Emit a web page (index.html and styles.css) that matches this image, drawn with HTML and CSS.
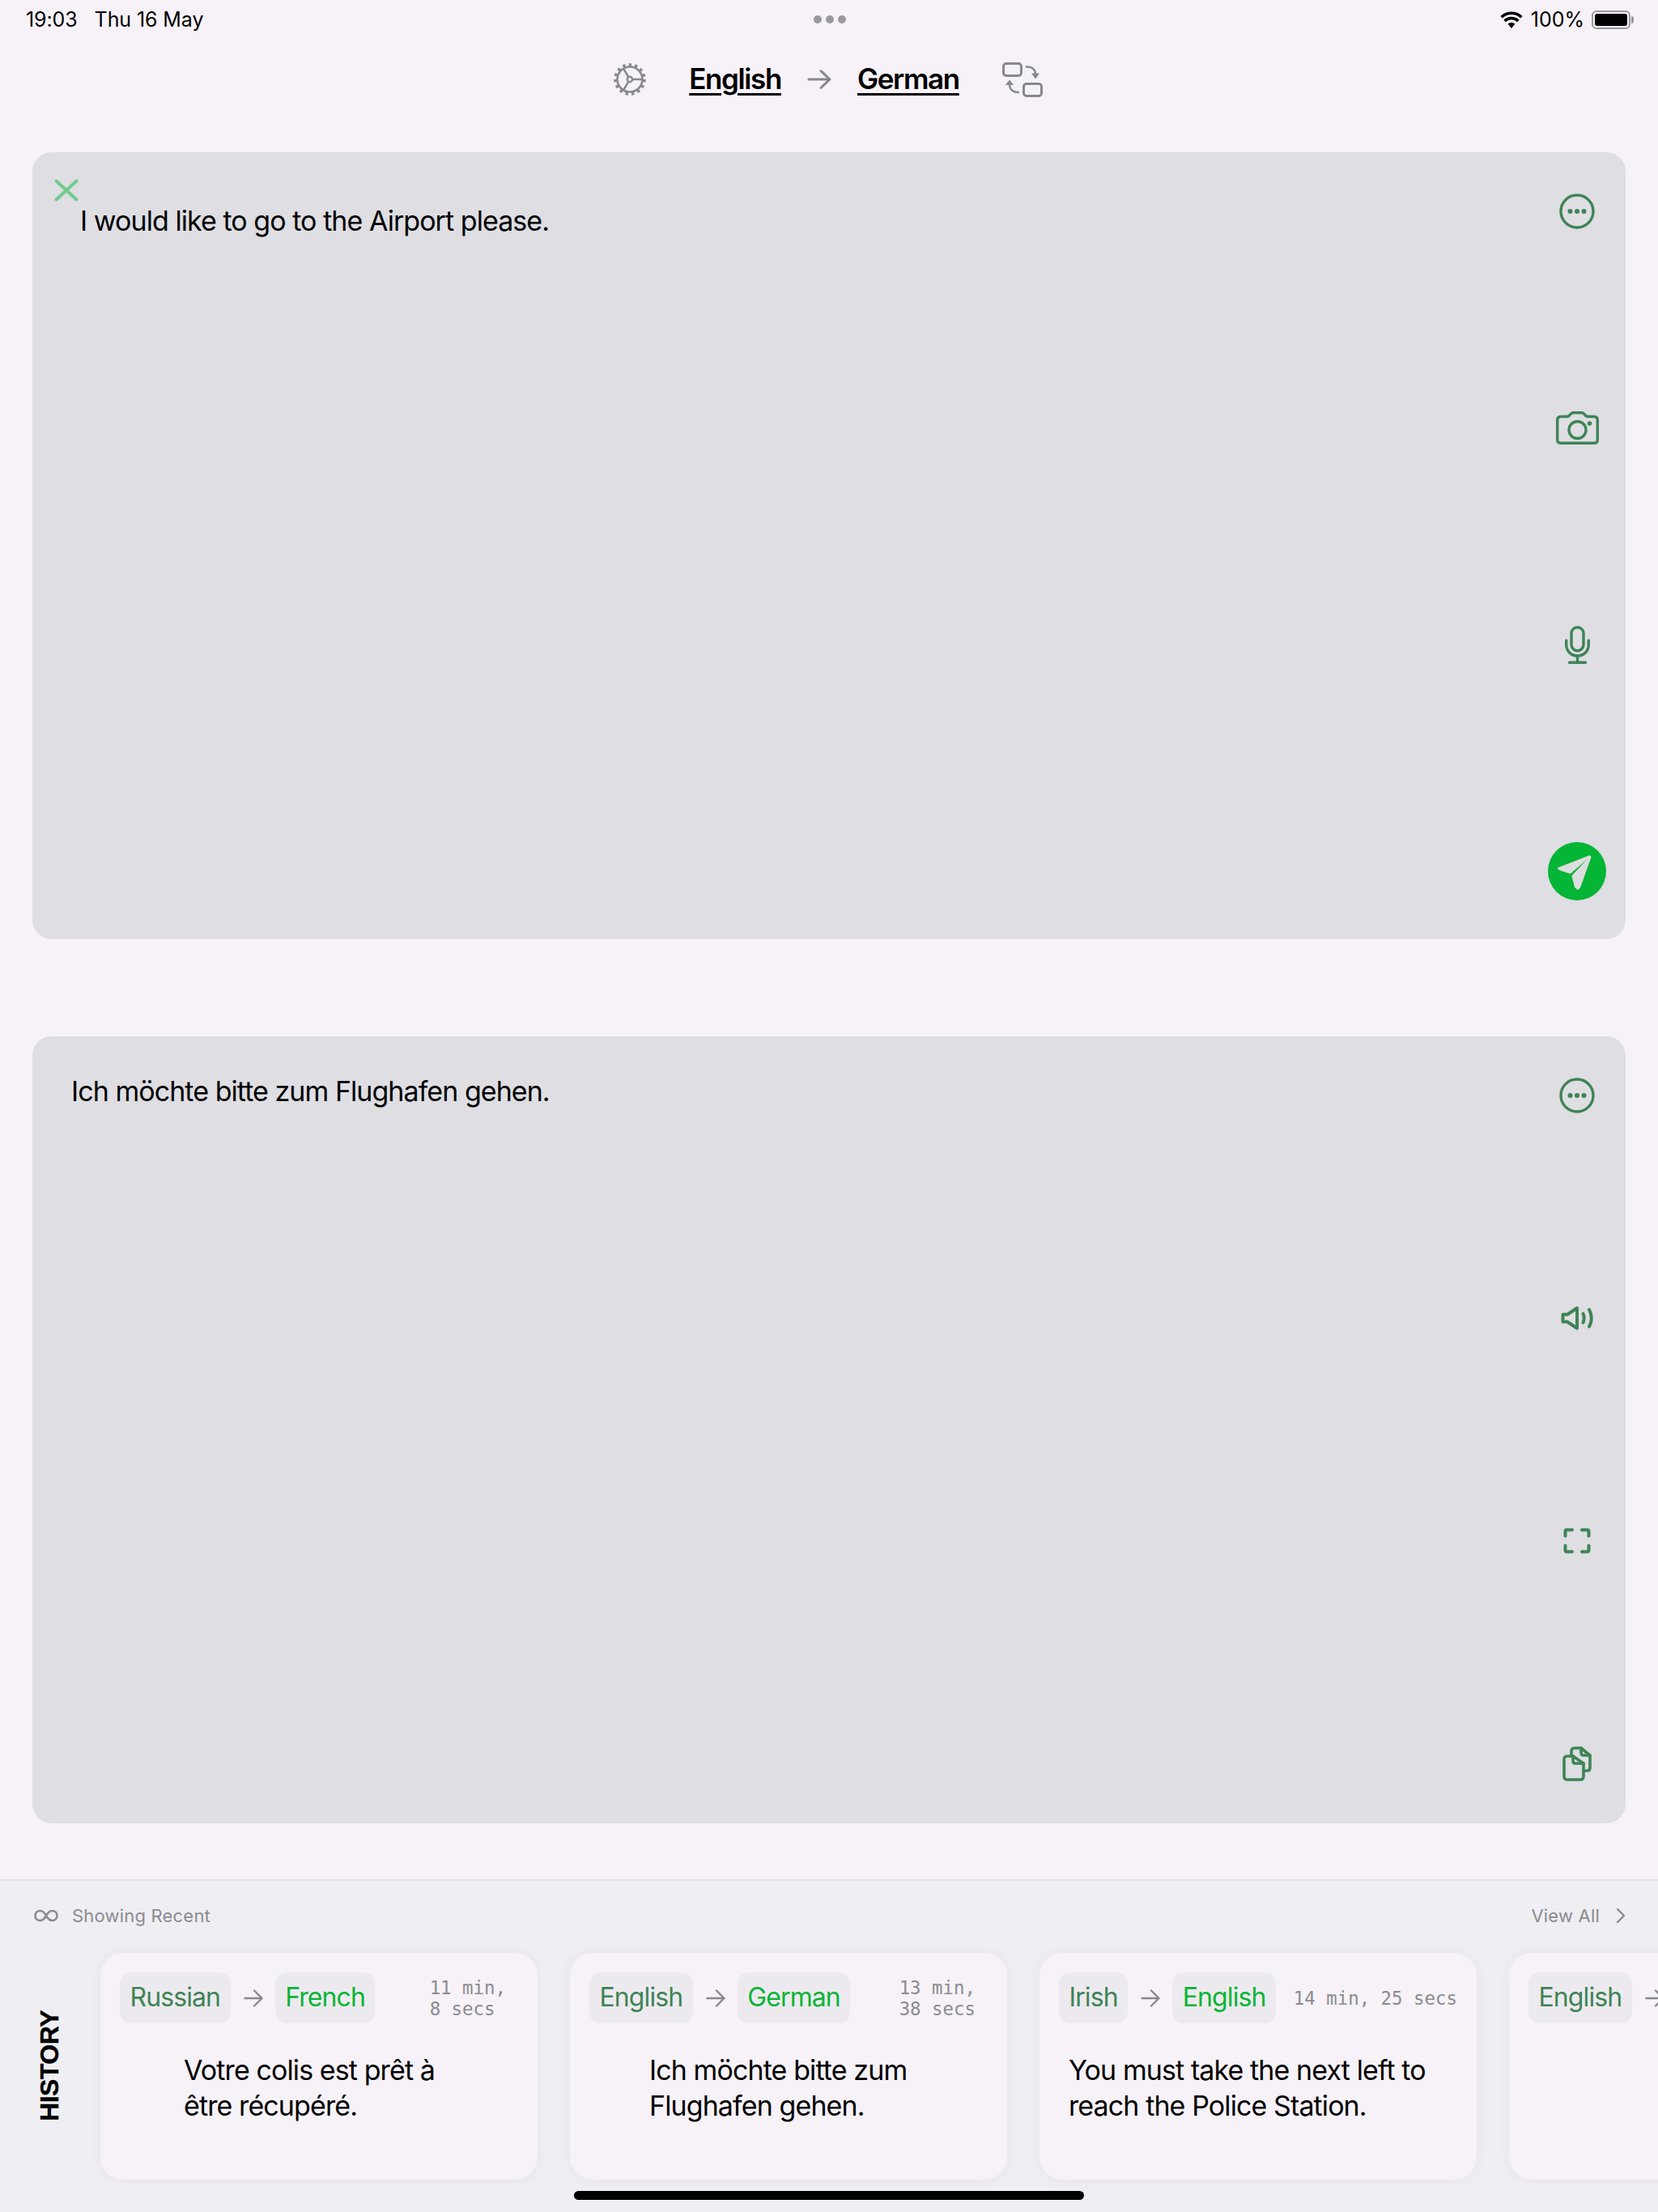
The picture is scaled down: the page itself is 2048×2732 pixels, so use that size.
FILE: index.html
```html
<!DOCTYPE html>
<html lang="en">
<head>
<meta charset="utf-8">
<title>Translate</title>
<link rel="stylesheet" href="styles.css">
</head>
<body>
<div class="page">
  <div class="status">
    <div class="status-left"><span>19:03</span><span>Thu 16 May</span></div>
    <div class="status-dots"><i></i><i></i><i></i></div>
    <div class="status-right">
      <svg class="wifi" viewBox="0 0 28 21"><path d="M14 21 L9.6 15.6 A7 7 0 0 1 18.4 15.6 Z"/><path d="M5.6 11.8 A12.5 12.5 0 0 1 22.4 11.8" fill="none" stroke="#000" stroke-width="3.6"/><path d="M1.6 7.2 A18 18 0 0 1 26.4 7.2" fill="none" stroke="#000" stroke-width="3.6"/></svg>
      <span>100%</span>
      <div class="battery"><div class="battery-fill"></div></div>
    </div>
  </div>

  <header class="langbar">
    <svg class="gear" viewBox="0 0 40 40" fill="none" stroke="#88888c"><circle cx="20" cy="20" r="15.5" stroke-width="2.6"/><circle cx="20" cy="20" r="18" stroke-width="3.6" stroke-dasharray="3.4 4.14"/><circle cx="20" cy="20" r="3.2" stroke-width="2.4"/><path d="M23 20H35M18.4 17.3L12.3 6.8M18.4 22.7L12.3 33.2" stroke-width="2.6"/></svg>
    <span class="lang">English</span>
    <svg class="bar-arrow" viewBox="0 0 30 26" fill="none" stroke="#88888c" stroke-width="3" stroke-linecap="round" stroke-linejoin="round"><path d="M2 13H28M17 2.5L28 13L17 23.5"/></svg>
    <span class="lang">German</span>
    <svg class="swap" viewBox="0 0 50 43" fill="none" stroke="#88888c" stroke-width="3"><rect x="1.5" y="1.5" width="22" height="15" rx="3.5"/><rect x="26.5" y="26.5" width="22" height="15" rx="3.5"/><path d="M29 5.5C36 5 41 8 41 15" stroke-width="2.4"/><path d="M36 13.5H46L41 20.5Z" fill="#88888c" stroke="none"/><path d="M21 37C14 37.500 9 34 9 27" stroke-width="2.4"/><path d="M4 28H14L9 21.500Z" fill="#88888c" stroke="none"/></svg>
  </header>

  <main class="panels">
    <section class="panel">
      <div class="panel-body panel-body-input">
        <svg class="clear" viewBox="0 0 30 28" fill="none" stroke="#72cb8c" stroke-width="4" stroke-linecap="round"><path d="M2.500 2.500L27.500 25.500M27.500 2.500L2.500 25.500"/></svg>
        <p class="panel-text panel-text-input">I would like to go to the Airport please.</p>
      </div>
      <div class="tools tools-input">
        <div class="tool"><svg class="i-more" viewBox="0 0 44 44" fill="none" stroke="#3e8455" stroke-width="3.400"><circle cx="22" cy="22" r="20"/><g fill="#3e8455" stroke="none"><circle cx="13.500" cy="22" r="3"/><circle cx="22" cy="22" r="3"/><circle cx="30.500" cy="22" r="3"/></g></svg></div>
        <div class="tool"><svg class="i-camera" viewBox="0 0 53 41" fill="none" stroke="#3e8455" stroke-width="3.400"><path d="M6 6.500H13.500C15.500 6.500 16.500 5.500 17.500 4C18.500 2.500 19.800 1.700 21.500 1.700H31.500C33.200 1.700 34.500 2.500 35.500 4C36.500 5.500 37.500 6.500 39.500 6.500H47C49.800 6.500 51.300 8.200 51.300 11V35C51.300 37.800 49.800 39.300 47 39.300H6C3.200 39.300 1.700 37.800 1.700 35V11C1.700 8.200 3.200 6.500 6 6.500Z"/><circle cx="26.500" cy="23" r="10.500"/><circle cx="41.500" cy="15" r="2.800" fill="#3e8455" stroke="none"/></svg></div>
        <div class="tool"><svg class="i-mic" viewBox="0 0 31 47" fill="none" stroke="#3e8455" stroke-width="3.400" stroke-linecap="round"><rect x="8" y="1.700" width="15" height="29" rx="7.500"/><path d="M1.700 18V23C1.700 31 7.500 37 15.500 37C23.500 37 29.300 31 29.300 23V18M15.500 37V45M5.500 45.300H25.500"/></svg></div>
        <div class="tool tool-send"><svg class="i-send" viewBox="0 0 72 72"><circle cx="36" cy="36" r="36" fill="#05b535"/><g fill="#dededf" stroke="#dededf" stroke-width="2" stroke-linejoin="round"><path d="M51.500 17.500L13 32.500L15 34L27.500 38Z"/><path d="M52.500 18.500L30.500 42L34 55.500L37 58L39.500 55Z"/></g></svg></div>
      </div>
    </section>

    <section class="panel">
      <div class="panel-body panel-body-output">
        <p class="panel-text">Ich möchte bitte zum Flughafen gehen.</p>
      </div>
      <div class="tools tools-output">
        <div class="tool"><svg class="i-more" viewBox="0 0 44 44" fill="none" stroke="#3e8455" stroke-width="3.400"><circle cx="22" cy="22" r="20"/><g fill="#3e8455" stroke="none"><circle cx="13.500" cy="22" r="3"/><circle cx="22" cy="22" r="3"/><circle cx="30.500" cy="22" r="3"/></g></svg></div>
        <div class="tool"><svg class="i-speaker" viewBox="0 0 41 30" fill="none" stroke="#3e8455" stroke-width="4" stroke-linecap="round" stroke-linejoin="round"><path d="M2.500 10.500H8L20 2.500V27.500L8 19.500H2.500Z"/><path d="M27.500 9.500C29 13 29 17 27.500 20.500"/><path d="M35 4.500C38.500 11 38.500 19 35 25.500"/></svg></div>
        <div class="tool"><svg class="i-expand" viewBox="0 0 34 32" fill="none" stroke="#3e8455" stroke-width="4" stroke-linecap="round" stroke-linejoin="round"><path d="M11 2.500H4.500C3 2.500 2.500 3 2.500 4.500V10M23 2.500H29.500C31 2.500 31.500 3 31.500 4.500V10M2.500 22V27.500C2.500 29 3 29.500 4.500 29.500H11M31.500 22V27.500C31.500 29 31 29.500 29.500 29.500H23"/></svg></div>
        <div class="tool"><svg class="i-copy" viewBox="0 0 36 43" fill="none" stroke="#3e8455" stroke-width="3.600" stroke-linejoin="round" stroke-linecap="round"><path d="M11 11V6C11 3.500 12.500 2 15 2H23L34 11V26C34 28.500 33 30 30.500 30H26"/><path d="M23 2V8C23 10 24 11 26 11H34"/><path d="M5.500 12H13L26 21V37C26 39.500 24.500 41 22 41H5.500C3 41 2 39.500 2 37V16C2 13.500 3 12 5.500 12Z"/><path d="M13 12V18C13 20 14 21 16 21H26"/></svg></div>
      </div>
    </section>
  </main>

  <footer class="history">
    <div class="history-head">
      <div class="history-note">
        <svg class="i-inf" viewBox="0 0 30 16" fill="none" stroke="#8b8b90" stroke-width="2.600"><path d="M15 8C12.500 3.500 10.500 2 7.500 2C4 2 1.500 4.500 1.500 8C1.500 11.500 4 14 7.500 14C10.500 14 12.500 12.500 15 8C17.500 3.500 19.500 2 22.500 2C26 2 28.500 4.500 28.500 8C28.500 11.500 26 14 22.500 14C19.500 14 17.500 12.500 15 8Z"/></svg>
        <span>Showing Recent</span>
      </div>
      <div class="history-all">
        <span>View All</span>
        <svg class="i-chev" viewBox="0 0 12 20" fill="none" stroke="#8b8b90" stroke-width="2.400" stroke-linecap="round" stroke-linejoin="round"><path d="M2 2L10 10L2 18"/></svg>
      </div>
    </div>
    <div class="history-body">
      <div class="history-label"><span>HISTORY</span></div>
      <div class="cards">
        <article class="card">
          <div class="card-head">
            <span class="chip chip-from">Russian</span>
            <svg class="card-arrow" viewBox="0 0 24 24" fill="none" stroke="#88888c" stroke-width="2.400" stroke-linecap="round" stroke-linejoin="round"><path d="M1.500 12H22.500M13 2.500L22.500 12L13 21.500"/></svg>
            <span class="chip chip-to">French</span>
            <span class="time time-wrap">11 min,<br>8 secs</span>
          </div>
          <p class="card-text indent-a">Votre colis est prêt à<br>être récupéré.</p>
        </article>
        <article class="card">
          <div class="card-head">
            <span class="chip chip-from">English</span>
            <svg class="card-arrow" viewBox="0 0 24 24" fill="none" stroke="#88888c" stroke-width="2.400" stroke-linecap="round" stroke-linejoin="round"><path d="M1.500 12H22.500M13 2.500L22.500 12L13 21.500"/></svg>
            <span class="chip chip-to">German</span>
            <span class="time time-wrap">13 min,<br>38 secs</span>
          </div>
          <p class="card-text indent-b">Ich möchte bitte zum<br>Flughafen gehen.</p>
        </article>
        <article class="card">
          <div class="card-head">
            <span class="chip chip-from">Irish</span>
            <svg class="card-arrow" viewBox="0 0 24 24" fill="none" stroke="#88888c" stroke-width="2.400" stroke-linecap="round" stroke-linejoin="round"><path d="M1.500 12H22.500M13 2.500L22.500 12L13 21.500"/></svg>
            <span class="chip chip-to">English</span>
            <span class="time">14 min, 25 secs</span>
          </div>
          <p class="card-text indent-c">You must take the next left to<br>reach the Police Station.</p>
        </article>
        <article class="card">
          <div class="card-head">
            <span class="chip chip-from">English</span>
            <svg class="card-arrow" viewBox="0 0 24 24" fill="none" stroke="#88888c" stroke-width="2.400" stroke-linecap="round" stroke-linejoin="round"><path d="M1.500 12H22.500M13 2.500L22.500 12L13 21.500"/></svg>
          </div>
        </article>
      </div>
    </div>
    <div class="home-bar"></div>
  </footer>
</div>
</body>
</html>
```
FILE: styles.css
```css
* { box-sizing: border-box; }
html, body { margin: 0; padding: 0; }
body {
  width: 2048px;
  height: 2732px;
  overflow: hidden;
  background: #f6f2f8;
  color: #000;
  font-family: Inter, "Noto Sans", sans-serif;
}
p { margin: 0; }
svg { display: block; flex: none; }

.page {
  display: flex;
  flex-direction: column;
  height: 100%;
}

/* status bar */
.status {
  height: 48px;
  flex: none;
  display: grid;
  grid-template-columns: 1fr auto 1fr;
  align-items: center;
  padding: 0 31px 0 32px;
  font-size: 25px;
}
.status-left { display: flex; gap: 21px; letter-spacing: -0.1px; }
.status-dots { display: flex; gap: 5px; }
.status-dots i {
  width: 10px;
  height: 10px;
  border-radius: 50%;
  background: #9a999e;
}
.status-right {
  display: flex;
  align-items: center;
  justify-content: flex-end;
  gap: 8px;
}
.wifi { width: 28px; height: 21px; margin-right: 2px; }
.battery {
  position: relative;
  width: 48px;
  height: 23px;
  margin-left: 1px;
  margin-right: 3px;
  padding: 2px;
  border: 2px solid #99989c;
  border-radius: 6px;
}
.battery::after {
  content: "";
  position: absolute;
  right: -6px;
  top: 5px;
  width: 3px;
  height: 9px;
  border-radius: 0 3px 3px 0;
  background: #99989c;
}
.battery-fill {
  height: 100%;
  border-radius: 3px;
  background: #000;
}

/* language bar */
.langbar {
  height: 100px;
  flex: none;
  display: flex;
  align-items: center;
  justify-content: center;
  padding-right: 2px;
}
.gear { width: 40px; height: 40px; margin-right: 53px; }
.lang {
  margin-bottom: 2px;
  font-size: 35px;
  font-weight: 600;
  letter-spacing: -1.4px;
  text-decoration: underline;
  text-decoration-thickness: 3px;
  text-underline-offset: 5px;
}
.bar-arrow { width: 30px; height: 26px; margin: 0 32px; }
.swap { width: 50px; height: 43px; margin-left: 53px; }

/* panels */
.panels {
  flex: 1;
  min-height: 0;
  display: flex;
  flex-direction: column;
  gap: 120px;
  padding: 40px 40px 69px;
}
.panel {
  flex: 1;
  display: flex;
  justify-content: space-between;
  background: #dedee3;
  border-radius: 24px;
}
.panel-body { flex: 1; min-width: 0; }
.panel-body-input { padding: 33px 0 0 27px; }
.panel-body-output { padding: 46px 0 0 48px; }
.clear { width: 30px; height: 28px; }
.panel-text {
  font-size: 34px;
  line-height: 44px;
  letter-spacing: -0.95px;
}
.panel-text-input { margin: 2px 0 0 32px; }

.tools {
  flex: none;
  width: 72px;
  margin-right: 24px;
  display: flex;
  flex-direction: column;
}
.tools-input { padding: 37px 0 48px; gap: 195.5px; }
.tools-output { padding: 37px 0 38px; justify-content: space-between; }
.tool {
  width: 72px;
  height: 72px;
  display: flex;
  align-items: center;
  justify-content: center;
}
.tool-send { margin-top: auto; }
.i-more { width: 44px; height: 44px; }
.i-camera { width: 53px; height: 41px; }
.i-mic { width: 31px; height: 47px; }
.i-send { width: 72px; height: 72px; }
.i-speaker { width: 41px; height: 30px; }
.i-expand { width: 34px; height: 32px; }
.i-copy { width: 36px; height: 43px; }

/* history */
.history {
  position: relative;
  flex: none;
  height: 411px;
  overflow: hidden;
  background: #efeef3;
  border-top: 2px solid #e3e2e7;
}
.history-head {
  display: flex;
  justify-content: space-between;
  align-items: center;
  height: 44px;
  margin-top: 21px;
  padding: 0 40px 0 42px;
  font-size: 22px;
  color: #8b8b90;
  letter-spacing: 0.2px;
}
.history-note { display: flex; align-items: center; gap: 17px; }
.history-all { display: flex; align-items: center; gap: 20px; }
.i-inf { width: 30px; height: 16px; }
.i-chev { width: 12px; height: 20px; }

.history-body {
  display: flex;
  margin-top: 24px;
}
.history-label {
  flex: none;
  width: 124px;
  height: 280px;
  padding: 0 0 72px 46px;
  display: flex;
  align-items: flex-end;
}
.history-label span {
  writing-mode: vertical-rl;
  transform: rotate(180deg);
  font-family: "Liberation Sans", Arial, sans-serif;
  font-size: 32px;
  font-weight: 700;
  line-height: 30px;
  letter-spacing: -0.5px;
  -webkit-text-stroke: 0.4px #000;
}
.cards { display: flex; gap: 40px; }
.card {
  flex: none;
  width: 540px;
  height: 280px;
  padding: 24px;
  background: #f6f2f8;
  border-radius: 28px;
  box-shadow: 0 0 16px rgba(60, 60, 80, 0.05);
}
.card-head {
  display: flex;
  align-items: center;
  height: 63px;
}
.chip {
  padding: 0 12.5px;
  height: 63px;
  line-height: 61px;
  font-size: 32px;
  letter-spacing: -0.9px;
  background: #edeaef;
  border-radius: 14px;
}
.chip-from { color: #3e8455; }
.chip-to { color: #05b535; }
.card-arrow { width: 24px; height: 24px; margin: 0 15px 0 16px; }
.time {
  margin-left: auto;
  font-family: "DejaVu Sans Mono", monospace;
  font-size: 22.4px;
  line-height: 26px;
  color: #8b8b90;
}
.time-wrap { margin-right: 15px; }
.card-text {
  margin-top: 36px;
  font-size: 34px;
  line-height: 44px;
  letter-spacing: -0.9px;
}
.indent-a { margin-left: 79px; }
.indent-b { margin-left: 74px; }
.indent-c { margin-left: 12px; }

.home-bar {
  position: absolute;
  left: 709px;
  bottom: 15px;
  width: 630px;
  height: 11px;
  border-radius: 6px;
  background: #000;
}
```
